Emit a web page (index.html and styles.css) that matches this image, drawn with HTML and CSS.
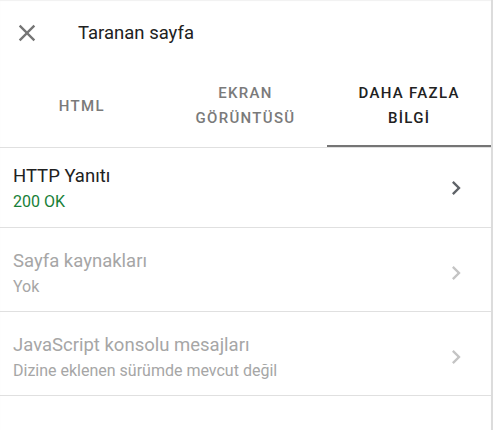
FILE: index.html
```html
<!DOCTYPE html>
<html lang="tr">
<head>
<meta charset="utf-8">
<link rel="stylesheet" href="styles.css">
</head>
<body>
<div class="panel">
  <header class="header">
    <svg class="close" viewBox="0 0 24 24" width="28" height="28"><path d="M19 6.41L17.59 5 12 10.59 6.41 5 5 6.41 10.59 12 5 17.59 6.41 19 12 13.41 17.59 19 19 17.59 13.41 12z" fill="#757575"/></svg>
    <span class="title">Taranan sayfa</span>
  </header>
  <nav class="tabs">
    <div class="tab">HTML</div>
    <div class="tab">EKRAN<br>GÖRÜNTÜSÜ</div>
    <div class="tab active">DAHA FAZLA<br>BİLGİ</div>
  </nav>
  <div class="row first">
    <div class="text">
      <div class="rtitle">HTTP Yanıtı</div>
      <div class="rsub ok">200 OK</div>
    </div>
    <svg class="chev" viewBox="0 0 24 24" width="28" height="28"><path d="M10 6L8.59 7.41 13.17 12l-4.58 4.59L10 18l6-6z" fill="#5f6368"/></svg>
  </div>
  <div class="row disabled">
    <div class="text">
      <div class="rtitle">Sayfa kaynakları</div>
      <div class="rsub">Yok</div>
    </div>
    <svg class="chev" viewBox="0 0 24 24" width="28" height="28"><path d="M10 6L8.59 7.41 13.17 12l-4.58 4.59L10 18l6-6z" fill="#c4c4c4"/></svg>
  </div>
  <div class="row disabled">
    <div class="text">
      <div class="rtitle">JavaScript konsolu mesajları</div>
      <div class="rsub">Dizine eklenen sürümde mevcut değil</div>
    </div>
    <svg class="chev" viewBox="0 0 24 24" width="28" height="28"><path d="M10 6L8.59 7.41 13.17 12l-4.58 4.59L10 18l6-6z" fill="#c4c4c4"/></svg>
  </div>
</div>
</body>
</html>
```

FILE: styles.css
```css
html, body {
  margin: 0;
  padding: 0;
  background: #fff;
  font-family: Roboto, "Liberation Sans", sans-serif;
}
.panel {
  width: 491px;
  height: 430px;
  border-right: 2px solid #dcdcdc;
  box-shadow: inset 0 1px 1px rgba(0,0,0,0.06);
}
.header {
  height: 65px;
  display: flex;
  align-items: center;
  padding-left: 13px;
}
.close {
  display: block;
}
.title {
  margin-left: 37px;
  font-size: 18.5px;
  color: #212121;
}
.tabs {
  display: grid;
  grid-template-columns: 1fr 1fr 1fr;
  height: 82px;
  border-bottom: 1px solid #e0e0e0;
}
.tab {
  display: flex;
  align-items: center;
  justify-content: center;
  text-align: center;
  font-size: 15px;
  font-weight: 500;
  letter-spacing: 1.3px;
  line-height: 25px;
  color: #7a7a7a;
}
.tab.active {
  color: #212121;
  box-shadow: inset 0 -2px 0 #757575;
}
.row {
  height: 82px;
  display: flex;
  align-items: center;
  padding: 0 21px 0 13px;
  border-bottom: 1px solid #e0e0e0;
}
.row.first {
  height: 79px;
}
.row.disabled {
  height: 77px;
  padding-top: 6px;
}
.text {
  flex: 1;
}
.rtitle {
  font-size: 18.5px;
  line-height: 28px;
  color: #212121;
}
.rsub {
  font-size: 16px;
  line-height: 24px;
  color: #757575;
}
.rsub.ok {
  color: #188038;
}
.disabled .rtitle,
.disabled .rsub {
  color: #a6a6a6;
}
.chev {
  display: block;
}
```
